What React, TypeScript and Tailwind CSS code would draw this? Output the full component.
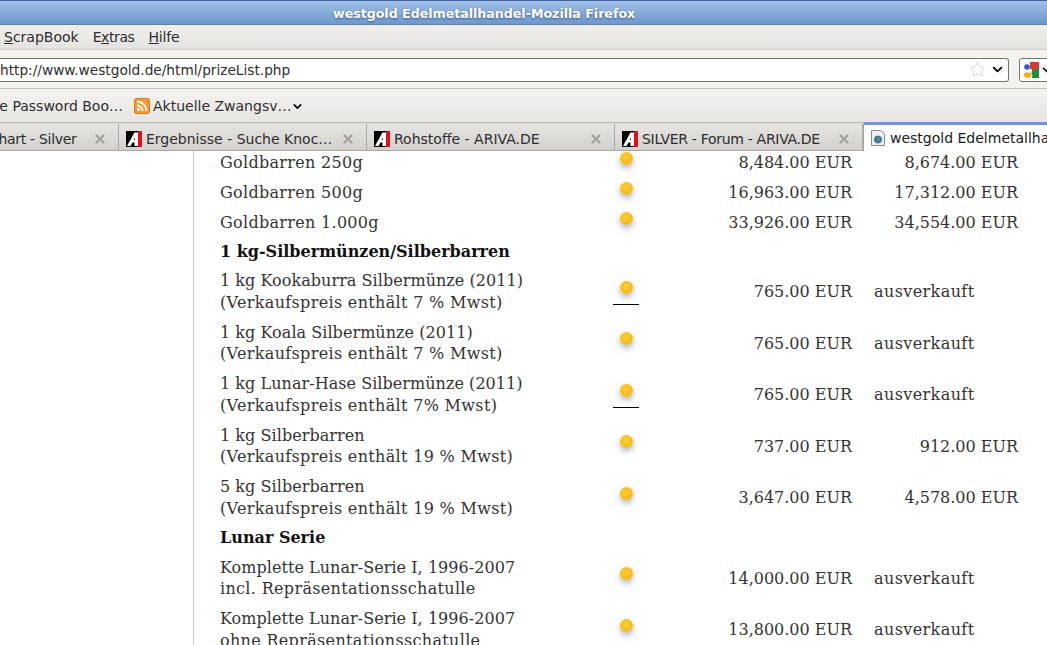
import React from 'react';
import { ChevronDown, Star, X } from 'lucide-react';

const rows: any[] = [
  { a: 'Goldbarren 250g', buy: '8,484.00 EUR', sell: '8,674.00 EUR' },
  { a: 'Goldbarren 500g', buy: '16,963.00 EUR', sell: '17,312.00 EUR' },
  { a: 'Goldbarren 1.000g', buy: '33,926.00 EUR', sell: '34,554.00 EUR' },
  { head: '1 kg-Silbermünzen/Silberbarren' },
  { a: '1 kg Kookaburra Silbermünze (2011)', b: '(Verkaufspreis enthält 7 % Mwst)', buy: '765.00 EUR', out: true, line: true },
  { a: '1 kg Koala Silbermünze (2011)', b: '(Verkaufspreis enthält 7 % Mwst)', buy: '765.00 EUR', out: true },
  { a: '1 kg Lunar-Hase Silbermünze (2011)', b: '(Verkaufspreis enthält 7% Mwst)', buy: '765.00 EUR', out: true, line: true },
  { a: '1 kg Silberbarren', b: '(Verkaufspreis enthält 19 % Mwst)', buy: '737.00 EUR', sell: '912.00 EUR' },
  { a: '5 kg Silberbarren', b: '(Verkaufspreis enthält 19 % Mwst)', buy: '3,647.00 EUR', sell: '4,578.00 EUR' },
  { head: 'Lunar Serie' },
  { a: 'Komplette Lunar-Serie I, 1996-2007', b: 'incl. Repräsentationsschatulle', buy: '14,000.00 EUR', out: true },
  { a: 'Komplette Lunar-Serie I, 1996-2007', b: 'ohne Repräsentationsschatulle', buy: '13,800.00 EUR', out: true },
];

const ArivaIcon = () => (
  <svg width="16" height="16" viewBox="0 0 16 16" className="shrink-0">
    <rect width="16" height="16" fill="#000" />
    <rect x="12" width="4" height="16" fill="#e0101c" />
    <polygon points="1,15 8.5,1.5 12,1.5 12,15 8.5,15 8.5,11.5 6.5,11.5 4.5,15" fill="#fff" />
    <polygon points="7.8,9 9,9 9,6.5" fill="#000" />
  </svg>
);

const Tab = ({ title, className = '', textClass = '' }: { title: string; className?: string; textClass?: string }) => (
  <div className={`flex items-center w-[248px] h-[26px] shrink-0 border-r border-[#a9a7a2] pt-[3px] pl-[7px] pr-[11px] bg-gradient-to-b from-[#e6e5e2] to-[#d2d1cd] ${className}`}>
    <ArivaIcon />
    <span className={`ml-[4px] flex-1 pt-[1px] whitespace-nowrap ${textClass}`}>{title}</span>
    <X size={14} strokeWidth={4} className="text-[#a3a29e] shrink-0" />
  </div>
);

const Coin = ({ line }: { line?: boolean }) => (
  <div className={`w-[26px] h-[29px] flex justify-center pt-[5px] ${line ? 'border-b border-black' : ''}`}>
    <div className="w-[13px] h-[13px] rounded-full bg-[radial-gradient(circle_at_45%_40%,#fbd030,#f5b81c_70%,#ec9f12)] shadow-[0_3px_6px_rgba(110,110,110,0.55)]" />
  </div>
);

export default function App() {
  return (
    <div className="w-[1047px] h-[645px] overflow-hidden flex flex-col bg-white font-['DejaVu_Sans',sans-serif] text-[14px] text-[#2e2e2e]">
      <div className="h-[25px] shrink-0 border-t border-[#3f66a0] border-b border-b-[#5c82b6] bg-gradient-to-b from-[#9fbfe6] to-[#6f97cc] pl-[333px] leading-[26px] text-[12.6px] font-bold text-white [text-shadow:0_1px_2px_rgba(40,70,120,0.8)] whitespace-nowrap">
        westgold Edelmetallhandel-Mozilla Firefox
      </div>

      <div className="h-[25px] shrink-0 flex items-center gap-[14px] pl-[4px] border-b border-[#cfcdc9] bg-gradient-to-b from-[#f0efed] to-[#e4e3e0]">
        <span><u>S</u>crapBook</span>
        <span className="tracking-[-0.4px]">E<u>x</u>tras</span>
        <span className="tracking-[-0.2px]"><u>H</u>ilfe</span>
      </div>

      <div className="h-[39px] shrink-0 flex items-center border-b border-[#c4c2be] bg-[#f3f2ef] pt-[1px]">
        <div className="w-[1009px] h-[24px] shrink-0 flex items-center justify-between bg-white border border-[#77756f] rounded-r-[3px] border-l-0 pr-[3px]">
          <span className="text-[13.7px] pt-[1px]">http://www.westgold.de/html/prizeList.php</span>
          <div className="flex items-center gap-[4px]">
            <Star size={17} strokeWidth={1} className="text-[#c4c4c4]" />
            <ChevronDown size={15} strokeWidth={3} className="text-black" />
          </div>
        </div>
        <div className="ml-[10px] w-[40px] h-[24px] shrink-0 flex items-center gap-[1px] pl-[3px] bg-white border border-[#77756f] rounded-[3px]">
          <svg width="16" height="16" viewBox="0 0 16 16" className="shrink-0">
            <rect x="7" y="0" width="9" height="7" fill="#d93a2c" />
            <path d="M9 7h7v9H8.5c1.2-1.5 1.2-3 0-4.5z" fill="#1f8f3c" />
            <circle cx="4" cy="5" r="2.8" fill="#2a5fd0" />
            <ellipse cx="4.5" cy="13" rx="4" ry="2.8" fill="#f2b41c" />
          </svg>
          <ChevronDown size={14} strokeWidth={3} className="text-black shrink-0" />
        </div>
      </div>

      <div className="h-[34px] shrink-0 flex items-center pt-[1px] border-b border-[#bdbbb6] bg-gradient-to-b from-[#f4f3f1] to-[#e6e5e2] whitespace-nowrap">
        <span className="-ml-[126px] w-[260px] text-right pr-[11px] shrink-0">Secure Password Boo…</span>
        <svg width="16" height="16" viewBox="0 0 16 16" className="shrink-0">
          <rect x="0.5" y="0.5" width="15" height="15" rx="2" fill="#f59a32" stroke="#d9791a" />
          <circle cx="4.5" cy="11.5" r="1.6" fill="#fff" />
          <path d="M3 7.5a5.5 5.5 0 0 1 5.5 5.5M3 3.5a9.5 9.5 0 0 1 9.5 9.5" stroke="#fff" strokeWidth="1.8" fill="none" />
        </svg>
        <span className="ml-[3px]">Aktuelle Zwangsv…</span>
        <ChevronDown size={13} strokeWidth={3} className="text-black" />
      </div>

      <div className="h-[28px] shrink-0 flex items-end border-b border-[#a9a7a2] bg-[#dddcd8] whitespace-nowrap">
        <Tab title="Chart - Silver" className="-ml-[129px] !pl-[98px]" textClass="tracking-[-0.3px]" />
        <Tab title="Ergebnisse - Suche Knoc…" />
        <Tab title="Rohstoffe - ARIVA.DE" />
        <Tab title="SILVER - Forum - ARIVA.DE" textClass="tracking-[-0.3px]" />
        <div className="flex items-center w-[200px] h-[29px] -mb-px shrink-0 pl-[7px] bg-white border-t-[3px] border-t-[#6f97cc] border-l border-[#a9a7a2] rounded-tl-[3px] text-[#1a1a1a]">
          <svg width="14" height="16" viewBox="0 0 14 16" className="shrink-0">
            <path d="M.5.5h9l4 3v12H.5z" fill="#eef0ee" stroke="#8a8a86" />
            <circle cx="7" cy="9.5" r="3.6" fill="#3f7fa8" stroke="#3d6a9c" />
            <circle cx="7.5" cy="9" r="1.8" fill="#5f9a4a" />
          </svg>
          <span className="ml-[5px] overflow-hidden">westgold Edelmetallhandel</span>
        </div>
      </div>

      <div className="flex-1 min-h-0 overflow-hidden flex">
        <div className="w-[194px] shrink-0 border-r border-[#cccccc]" />
        <div className="flex-1 -mt-[4px] pl-[26px] font-['DejaVu_Serif',serif] text-[16px] text-[#333333]">
          {rows.map((r, i) =>
            r.head ? (
              <div key={i} className="h-[29px] flex items-center font-bold text-[#111111] whitespace-nowrap">{r.head}</div>
            ) : (
              <div key={i} className={`flex items-center whitespace-nowrap ${r.b ? 'h-[51.5px] leading-[21.5px]' : 'h-[30px] pt-[2px]'}`}>
                <div className="w-[393px] shrink-0">
                  <div className={r.b ? 'tracking-[0.05px]' : 'tracking-[0.3px]'}>{r.a}</div>
                  {r.b && <div className="tracking-[0.33px]">{r.b}</div>}
                </div>
                <div className="w-[26px] shrink-0 -mt-[3px]"><Coin line={r.line} /></div>
                <div className="w-[213px] shrink-0 text-right">{r.buy}</div>
                <div className="w-[166px] pl-[22px] shrink-0 text-right">
                  {r.out ? <div className="text-left tracking-[0.4px]">ausverkauft</div> : r.sell}
                </div>
              </div>
            )
          )}
        </div>
      </div>
    </div>
  );
}
